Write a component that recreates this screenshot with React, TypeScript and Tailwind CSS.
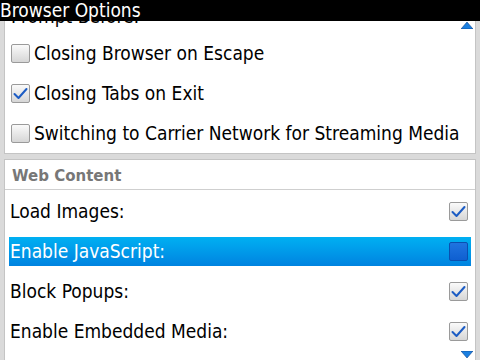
import React from 'react';

function Check({ on, hi }: { on?: boolean; hi?: boolean }) {
  if (hi) {
    return (
      <div className="w-[19px] h-[19px] rounded-[2px] border border-[#0a4fb0] bg-gradient-to-b from-[#1f74e0] to-[#0f5fd0] shrink-0" />
    );
  }
  return (
    <div className="w-[19px] h-[19px] rounded-[2px] border border-[#9a9a9a] bg-gradient-to-b from-[#fafafa] to-[#d6d6d6] shrink-0 flex items-center justify-center">
      {on && (
        <svg width="15" height="13" viewBox="0 0 15 13">
          <polyline points="1.5,7 5.5,11 13.5,2" fill="none" stroke="#1c5cc4" strokeWidth="2" strokeLinecap="round" strokeLinejoin="round" />
        </svg>
      )}
    </div>
  );
}

function LeftRow({ label, on }: { label: string; on?: boolean }) {
  return (
    <div className="h-[40px] flex items-center gap-[4px] pl-[6px]">
      <Check on={on} />
      <span>{label}</span>
    </div>
  );
}

function RightRow({ label, on, hi }: { label: string; on?: boolean; hi?: boolean }) {
  return (
    <div className="h-[40px] flex items-center px-[4px]">
      <div
        className={
          'flex-1 h-[29px] flex items-center justify-between pl-[1px] pr-[3px] ' +
          (hi ? 'bg-gradient-to-b from-[#00b0f2] to-[#0083e0] text-white' : '')
        }
      >
        <span>{label}</span>
        <Check on={on} hi={hi} />
      </div>
    </div>
  );
}

export default function App() {
  return (
    <div
      className="w-[480px] h-[360px] overflow-hidden bg-[#dadada] flex flex-col text-[19px] text-black leading-none relative"
      style={{ fontFamily: '"DejaVu Sans Condensed", "DejaVu Sans", sans-serif' }}
    >
      <div className="h-[21px] shrink-0 bg-black text-white text-[19px] leading-[20px] z-10">
        Browser Options
      </div>
      <div className="flex-1 overflow-hidden flex flex-col pl-[4px] pr-[4px] gap-[5px]">
        <div className="mt-[-10px] bg-white border border-[#c4c4c4] border-t-0">
          <div className="h-[22px] overflow-hidden pl-[6px]">
            <div className="leading-[19px] mt-[-4px]">Prompt Before:</div>
          </div>
          <LeftRow label="Closing Browser on Escape" />
          <LeftRow label="Closing Tabs on Exit" on />
          <LeftRow label="Switching to Carrier Network for Streaming Media" />
        </div>
        <div className="flex-1 bg-white border border-[#c4c4c4] border-b-0">
          <div
            className="h-[30px] flex items-center pt-[4px] pl-[7px] text-[15px] font-bold text-[#777777] border-b border-[#cfcfcf]"
            style={{ fontFamily: '"DejaVu Sans", sans-serif' }}
          >
            Web Content
          </div>
          <div className="pt-[1px]">
            <RightRow label="Load Images:" on />
            <RightRow label="Enable JavaScript:" hi />
            <RightRow label="Block Popups:" on />
            <RightRow label="Enable Embedded Media:" on />
          </div>
        </div>
      </div>
      <svg className="absolute left-[461px] top-[22px]" width="12" height="7" viewBox="0 0 12 7">
        <polygon points="6,0 12,7 0,7" fill="#1a7fe0" stroke="#0b3f8a" strokeWidth="0.6" />
      </svg>
      <svg className="absolute left-[461px] top-[351px]" width="12" height="7" viewBox="0 0 12 7">
        <polygon points="0,0 12,0 6,7" fill="#1a7fe0" stroke="#0b3f8a" strokeWidth="0.6" />
      </svg>
    </div>
  );
}
